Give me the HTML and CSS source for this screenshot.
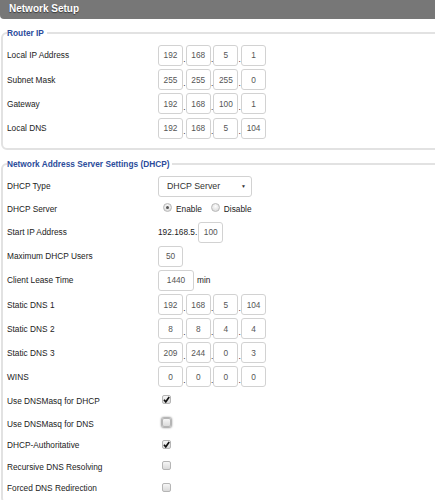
FILE: index.html
```html
<!DOCTYPE html>
<html>
<head>
<meta charset="utf-8">
<link rel="stylesheet" href="styles.css">
</head>
<body>
<div class="page">
  <div class="header">Network Setup</div>

  <fieldset class="group g1">
    <legend>Router IP</legend>
    <div class="row ra"><span class="lbl">Local IP Address</span>
      <div class="ip"><span class="box">192</span><span class="dot">.</span><span class="box">168</span><span class="dot">.</span><span class="box">5</span><span class="dot">.</span><span class="box">1</span></div></div>
    <div class="row ra"><span class="lbl">Subnet Mask</span>
      <div class="ip"><span class="box">255</span><span class="dot">.</span><span class="box">255</span><span class="dot">.</span><span class="box">255</span><span class="dot">.</span><span class="box">0</span></div></div>
    <div class="row ra"><span class="lbl">Gateway</span>
      <div class="ip"><span class="box">192</span><span class="dot">.</span><span class="box">168</span><span class="dot">.</span><span class="box">100</span><span class="dot">.</span><span class="box">1</span></div></div>
    <div class="row ra"><span class="lbl">Local DNS</span>
      <div class="ip"><span class="box">192</span><span class="dot">.</span><span class="box">168</span><span class="dot">.</span><span class="box">5</span><span class="dot">.</span><span class="box">104</span></div></div>
  </fieldset>

  <fieldset class="group g2">
    <legend>Network Address Server Settings (DHCP)</legend>
    <div class="row h225"><span class="lbl">DHCP Type</span>
      <div class="select"><span>DHCP Server</span><span class="caret">▼</span></div></div>
    <div class="row h23"><span class="lbl">DHCP Server</span>
      <div class="radios"><span class="radio on"></span><span class="rtxt">Enable</span><span class="radio"></span><span class="rtxt">Disable</span></div></div>
    <div class="row h235"><span class="lbl">Start IP Address</span>
      <div class="ctl"><span class="pre">192.168.5.</span><span class="box">100</span></div></div>
    <div class="row h24"><span class="lbl">Maximum DHCP Users</span>
      <div class="ctl"><span class="box">50</span></div></div>
    <div class="row h245"><span class="lbl">Client Lease Time</span>
      <div class="ctl"><span class="box wide">1440</span><span class="post">min</span></div></div>
    <div class="row h242"><span class="lbl">Static DNS 1</span>
      <div class="ip"><span class="box">192</span><span class="dot">.</span><span class="box">168</span><span class="dot">.</span><span class="box">5</span><span class="dot">.</span><span class="box">104</span></div></div>
    <div class="row h24"><span class="lbl">Static DNS 2</span>
      <div class="ip"><span class="box">8</span><span class="dot">.</span><span class="box">8</span><span class="dot">.</span><span class="box">4</span><span class="dot">.</span><span class="box">4</span></div></div>
    <div class="row h24"><span class="lbl">Static DNS 3</span>
      <div class="ip"><span class="box">209</span><span class="dot">.</span><span class="box">244</span><span class="dot">.</span><span class="box">0</span><span class="dot">.</span><span class="box">3</span></div></div>
    <div class="row h243"><span class="lbl">WINS</span>
      <div class="ip"><span class="box">0</span><span class="dot">.</span><span class="box">0</span><span class="dot">.</span><span class="box">0</span><span class="dot">.</span><span class="box">0</span></div></div>
    <div class="row h235"><span class="lbl">Use DNSMasq for DHCP</span>
      <div class="ctl"><span class="cb on"><svg viewBox="0 0 10 10"><path d="M2.2 5.2 L4.2 7.6 L8 2.2" fill="none" stroke="#111" stroke-width="1.8"/></svg></span></div></div>
    <div class="row h22"><span class="lbl">Use DNSMasq for DNS</span>
      <div class="ctl"><span class="cb focus"></span></div></div>
    <div class="row h215"><span class="lbl">DHCP-Authoritative</span>
      <div class="ctl"><span class="cb on"><svg viewBox="0 0 10 10"><path d="M2.2 5.2 L4.2 7.6 L8 2.2" fill="none" stroke="#111" stroke-width="1.8"/></svg></span></div></div>
    <div class="row h21"><span class="lbl">Recursive DNS Resolving</span>
      <div class="ctl"><span class="cb"></span></div></div>
    <div class="row h22"><span class="lbl">Forced DNS Redirection</span>
      <div class="ctl"><span class="cb"></span></div></div>
  </fieldset>
</div>
</body>
</html>
```
FILE: styles.css
```css
html, body {
  margin: 0;
  padding: 0;
  background: #fff;
  overflow: hidden;
}
body {
  font-family: "Liberation Sans", Arial, sans-serif;
  font-size: 8.3px;
  color: #222;
}
.page {
  width: 435px;
  overflow: hidden;
}
.header {
  height: 19px;
  line-height: 18px;
  background: #777777;
  color: #fff;
  font-weight: bold;
  font-size: 10px;
  padding-left: 9px;
  border-radius: 0 0 0 4px;
  text-shadow: 0 1px 1px #3a3a3a;
}
.group {
  margin: 9px -40px 0 1px;
  border: 2px solid #e2e2e2;
  border-radius: 6px;
  padding: 0 0 0 4px;
  min-width: 0;
}
.g1 {
  padding-top: 5.4px;
  padding-bottom: 7.8px;
}
.g2 {
  padding-top: 6.2px;
  padding-bottom: 3px;
}
legend {
  color: #2b4c9b;
  font-weight: bold;
  font-size: 8.3px;
  line-height: 10px;
  padding: 0 3px 0 0;
  margin-left: 0;
}
.row {
  display: flex;
  align-items: center;
}
.ra { height: 24.2px; }
.h21 { height: 21px; }
.h215 { height: 21.5px; }
.h22 { height: 22px; }
.h225 { height: 22.5px; }
.h23 { height: 23px; }
.h235 { height: 23.5px; }
.h24 { height: 24px; }
.h242 { height: 24.2px; }
.h243 { height: 24.3px; }
.h245 { height: 24.5px; }
.lbl {
  width: 151px;
  flex: none;
  color: #222;
}
.ip, .ctl, .radios {
  display: flex;
  align-items: center;
}
.box {
  display: inline-flex;
  align-items: center;
  justify-content: center;
  box-sizing: border-box;
  width: 25px;
  height: 21px;
  border: 1px solid #d2d2d2;
  border-radius: 3px;
  background: #fff;
  color: #555;
}
.box.wide { width: 36px; }
.dot {
  width: 2.7px;
  text-align: center;
  align-self: flex-end;
  margin-bottom: 3px;
  color: #333;
  line-height: 1;
}
.pre { margin-right: 1px; }
.post { margin-left: 3px; }
.select {
  display: flex;
  align-items: center;
  justify-content: space-between;
  padding: 0 5px 0 8px;
  box-sizing: border-box;
  width: 94px;
  height: 21px;
  border: 1px solid #d2d2d2;
  border-radius: 3px;
  color: #333;
  font-size: 8.8px;
}
.caret {
  font-size: 5px;
  color: #333;
}
.radios { padding-left: 5px; }
.radio {
  width: 9px;
  height: 9px;
  border-radius: 50%;
  border: 1px solid #b8b8b8;
  background: radial-gradient(circle at 50% 35%, #fdfdfd, #d4d4d4);
  box-sizing: border-box;
  position: relative;
  margin-bottom: 3px;
}
.radio.on::after {
  content: "";
  position: absolute;
  left: 2px;
  top: 2px;
  width: 3px;
  height: 3px;
  border-radius: 50%;
  background: #555;
}
.rtxt { margin: 0 9px 0 4px; }
.cb {
  width: 9px;
  height: 9px;
  margin-left: 4px;
  margin-bottom: 2px;
  border: 1px solid #b5b5b5;
  border-radius: 2px;
  box-sizing: border-box;
  background: linear-gradient(#f6f6f6, #dadada);
  display: inline-flex;
  align-items: center;
  justify-content: center;
}
.cb svg { width: 9px; height: 9px; flex: none; }
.cb.focus {
  box-shadow: 0 0 2px 1px #9a9a9a;
}
```
